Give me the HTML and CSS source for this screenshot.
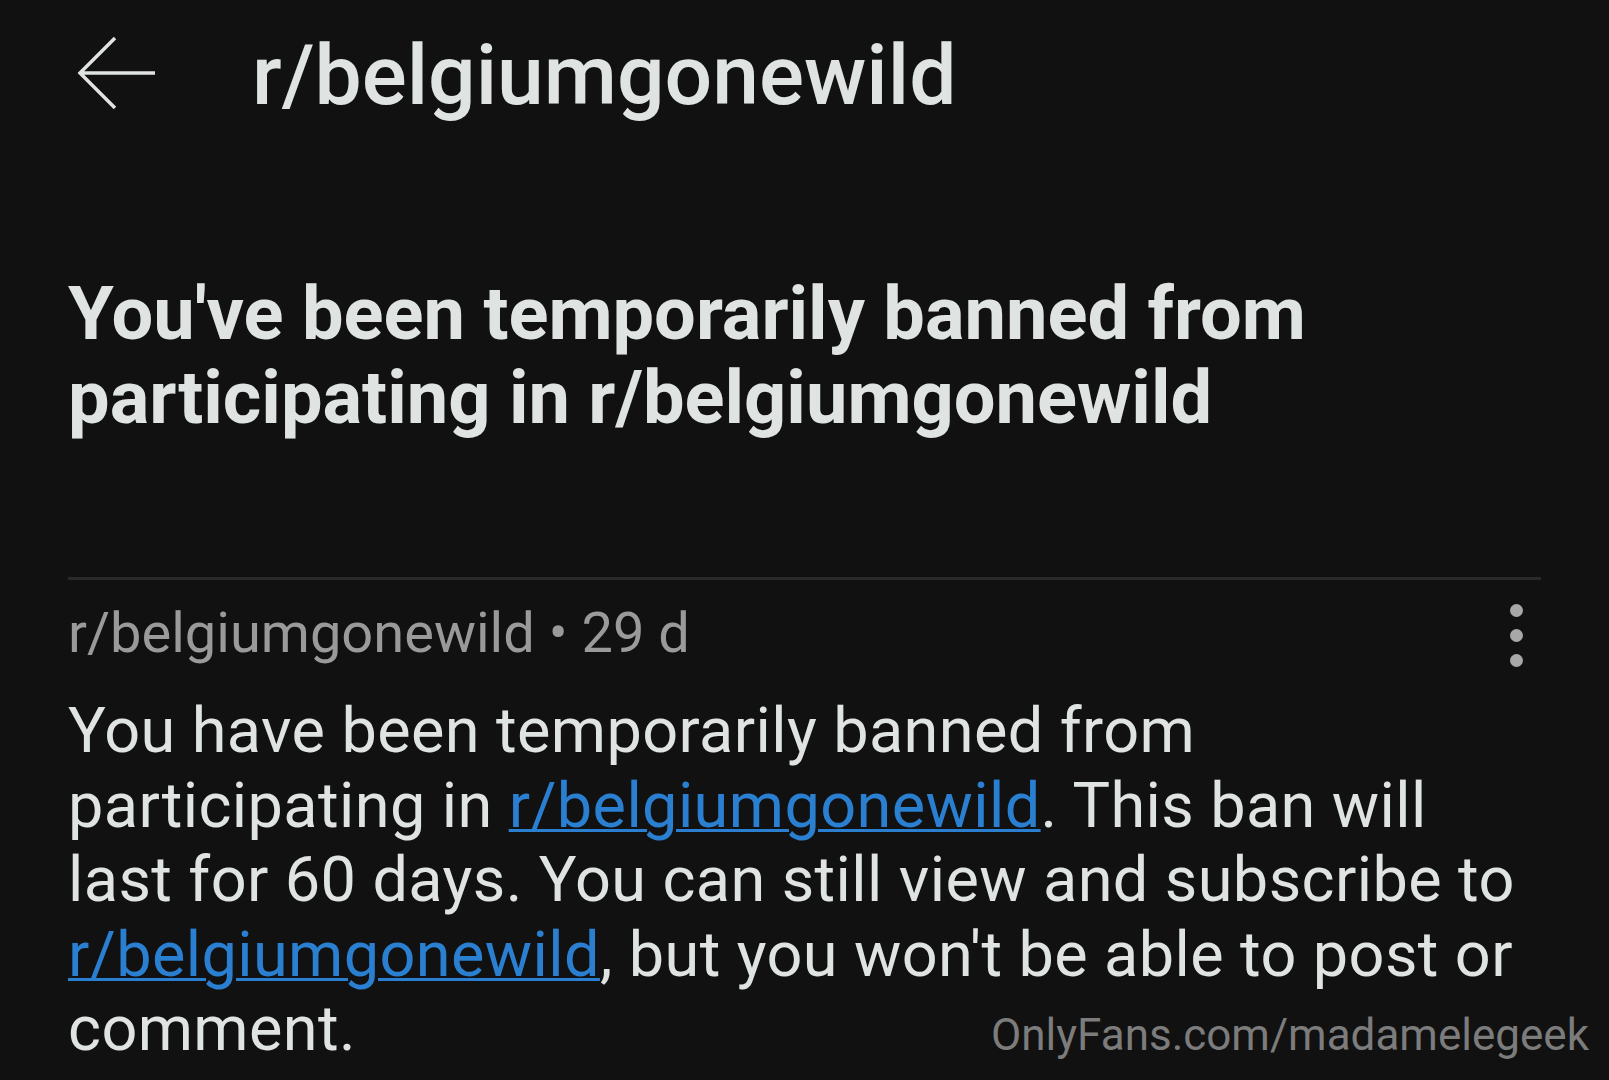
FILE: index.html
```html
<html>
	<head>
        <title>r/belgiumgonewild</title>
        <meta charset="utf-8">
        <link rel="stylesheet" href="styles.css">
	</head>
	<body>
        <div id="topo">
            <svg id="voltar" width="80" height="76" viewBox="0 0 80 76">
                <path d="M78 37 L4 37 M38 2 L3 37 L38 72" fill="none" stroke="#dfe3e1" stroke-width="3.5"/>
            </svg>
            <div id="titulo">r/belgiumgonewild</div>
        </div>

        <h1 id="aviso">You've been temporarily banned from participating in r/belgiumgonewild</h1>

        <div id="mensagem">
            <div id="cabecalho">
                <span>r/belgiumgonewild • 29 d</span>
                <div id="mais">
                    <i></i><i></i><i></i>
                </div>
            </div>
            <p id="corpo">You have been temporarily banned from participating in <a href="#">r/belgiumgonewild</a>. This ban will last for 60 days. You can still view and subscribe to <a href="#">r/belgiumgonewild</a>, but you won't be able to post or comment.</p>
            <div id="marca">OnlyFans.com/madamelegeek</div>
        </div>
	</body>
</html>
```

FILE: styles.css
```css
body{
    margin: 0;
    background-color: #111111;
    color: #dfe3e1;
    font-family: Roboto, "Noto Sans", sans-serif;
    width: 1609px;
    height: 1080px;
    overflow: hidden;
}
#topo{
    display: flex;
    align-items: center;
    padding: 36px 0 0 77px;
    height: 76px;
}
#voltar{
    display: block;
}
#titulo{
    margin-left: 95px;
    font-size: 84px;
    font-weight: 500;
    line-height: 76px;
    position: relative;
    top: 2px;
}
#aviso{
    margin: 160px 0 137px 68px;
    width: 1473px;
    font-size: 74px;
    font-weight: 700;
    line-height: 84px;
}
#mensagem{
    position: relative;
    margin: 0 0 0 68px;
    width: 1473px;
    border-top: 3px solid #2a2a2a;
}
#cabecalho{
    display: flex;
    justify-content: space-between;
    align-items: center;
    margin-top: 20px;
    color: #9a9a9a;
    font-size: 56px;
    line-height: 66px;
}
#mais{
    display: flex;
    flex-direction: column;
    gap: 12px;
    margin-right: 18px;
    position: relative;
    top: 2px;
}
#mais i{
    display: block;
    width: 13px;
    height: 13px;
    border-radius: 50%;
    background-color: #a8a8a8;
}
#corpo{
    margin: 28px 0 0 0;
    font-size: 63px;
    letter-spacing: 0.4px;
    line-height: 74.5px;
}
#corpo a{
    color: #2a7fd0;
    text-decoration-thickness: 3px;
}
#marca{
    position: absolute;
    right: -48px;
    bottom: 6px;
    color: #7c7c7c;
    font-size: 44px;
}
```
